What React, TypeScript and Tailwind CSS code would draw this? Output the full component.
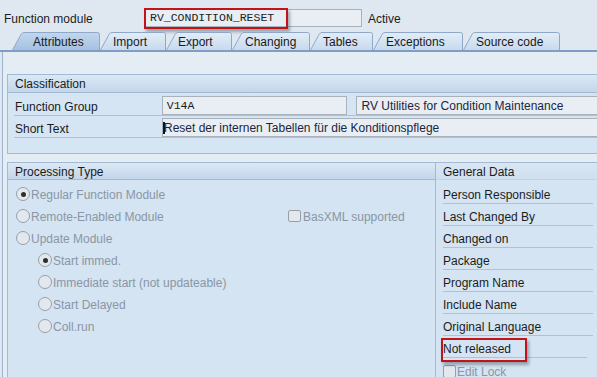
import React from "react";

const tabs = [
  { label: "Attributes", w: 88, pl: 21, active: true },
  { label: "Import", w: 66, pl: 13 },
  { label: "Export", w: 66, pl: 12 },
  { label: "Changing", w: 78, pl: 13 },
  { label: "Tables", w: 63, pl: 13 },
  { label: "Exceptions", w: 90, pl: 13 },
  { label: "Source code", w: 97, pl: 13 },
];

function Tab({ label, w, pl, active }: { label: string; w: number; pl: number; active?: boolean }) {
  const d = `M0.5 18 L9 2.5 Q10 0.5 12 0.5 L${w - 2.5} 0.5 Q${w - 0.5} 0.5 ${w - 0.5} 2.5 L${w - 0.5} 18`;
  return (
    <div className="relative h-[18px] flex items-center" style={{ width: w }}>
      <svg className="absolute inset-0" width={w} height={18} viewBox={`0 0 ${w} 18`}>
        <defs>
          <linearGradient id="tabA" x1="0" y1="0" x2="0" y2="1">
            <stop offset="0" stopColor="#c3d7ed" />
            <stop offset="1" stopColor="#a5c1e1" />
          </linearGradient>
          <linearGradient id="tabI" x1="0" y1="0" x2="0" y2="1">
            <stop offset="0" stopColor="#e3edf7" />
            <stop offset="1" stopColor="#c8daee" />
          </linearGradient>
        </defs>
        <path d={d} fill={active ? "url(#tabA)" : "url(#tabI)"} stroke="#8ea8c9" strokeWidth="1" />
      </svg>
      <span className="relative text-[12px] leading-none text-[#1a1a1a] pt-[2px]" style={{ paddingLeft: pl }}>
        {label}
      </span>
    </div>
  );
}

function Radio({ checked }: { checked?: boolean }) {
  return (
    <span className="w-[14px] h-[14px] rounded-full border border-[#9a9fa5] bg-[#e2e8ee] flex items-center justify-center shrink-0">
      {checked && <span className="w-[5px] h-[5px] rounded-full bg-[#2e2e2e]" />}
    </span>
  );
}

function RadioRow({ label, checked, indent, children }: { label: string; checked?: boolean; indent?: boolean; children?: React.ReactNode }) {
  return (
    <div className={`h-[22px] flex items-center ${indent ? "pl-[30px]" : "pl-[8px]"}`}>
      <div className={`flex items-center ${children ? "w-[272px]" : ""}`}>
        <Radio checked={checked} />
        <span className="ml-[1px] text-[#8a96a3] pt-[1px]">{label}</span>
      </div>
      {children}
    </div>
  );
}

function GenRow({ label, children }: { label: string; children?: React.ReactNode }) {
  return (
    <div className="h-[22px] relative">
      <div className="h-[20px] w-[150px] border-b border-[#b3c0cd] flex items-center pt-[3px]">{label}</div>
      {children}
    </div>
  );
}

export default function App() {
  return (
    <div className="w-[597px] h-[377px] overflow-hidden bg-[#dfe8f0] font-['Liberation_Sans',sans-serif] text-[12px] text-[#1c1c1c]">
      {/* Top row */}
      <div className="h-[32px] pt-[4px] flex items-center">
        <div className="w-[144px] pl-[4px] pt-[1px]">Function module</div>
        <div className="relative w-[218px] h-[18px] border border-[#a9b2bb] bg-[#e8eef4] flex items-center pl-[5px] font-['Liberation_Mono',monospace] text-[11.5px] text-[#222]">
          RV_CONDITION_RESET
          <div className="absolute left-[-1px] top-[-2px] w-[144px] h-[21px] border-2 border-[#c0141b] shadow-[2px_3px_3px_rgba(0,0,0,0.3)]" />
        </div>
        <div className="ml-[6px] pt-[1px]">Active</div>
      </div>

      {/* Tabs */}
      <div className="h-[18px] flex pl-[12px]">
        {tabs.map((t) => (
          <Tab key={t.label} {...t} />
        ))}
      </div>
      <div className="h-[2px] bg-[#7f9ec5]" />

      {/* Content */}
      <div className="ml-[2px] border-l border-[#9cb3cf] bg-[#e4ecf4] h-[330px] pt-[22px] pl-[4px]">
        {/* Classification */}
        <div className="w-[620px] h-[80px] border border-[#a3bad4] bg-[#d6e5f3]">
          <div className="h-[18px] border-b border-[#a3bad4] bg-gradient-to-b from-[#dce8f4] to-[#c3d6eb] pl-[7px] pt-[1px] flex items-center">
            Classification
          </div>
          <div className="ml-[6px] mt-[3px] h-[20px] border-b border-[#b3c0cd] flex items-start">
            <div className="w-[148px] pl-[1px] h-[19px] pt-[2px] flex items-center">Function Group</div>
            <div className="w-[186px] h-[19px] border border-[#a9b2bb] bg-[#e8eef4] flex items-center pl-[4px] pt-[1px] font-['Liberation_Mono',monospace] text-[11.5px]">
              V14A
            </div>
            <div className="ml-[9px] w-[270px] h-[19px] border border-[#a9b2bb] bg-[#e8eef4] flex items-center pl-[4px] pt-[1px] text-[#1d2540]">
              RV Utilities for Condition Maintenance
            </div>
          </div>
          <div className="ml-[6px] mt-[2px] h-[20px] border-b border-[#b3c0cd] flex items-start">
            <div className="w-[148px] pl-[1px] h-[19px] pt-[2px] flex items-center">Short Text</div>
            <div className="w-[460px] h-[19px] border border-[#a9b2bb] bg-[#e8eef4] flex items-center pt-[1px] text-[#1d2540]">
              <span className="w-[2px] h-[12px] bg-[#111] mr-[-1px]" />
              Reset der internen Tabellen für die Konditionspflege
            </div>
          </div>
        </div>

        {/* Processing / General */}
        <div className="mt-[8px] w-[620px] h-[230px] border border-[#a3bad4] bg-[#d4e4f3] flex">
          <div className="w-[428px] border-r border-[#a3bad4]">
            <div className="h-[17px] border-b border-[#a3bad4] bg-gradient-to-b from-[#dce8f4] to-[#c3d6eb] pl-[7px] pt-[1px] flex items-center">
              Processing Type
            </div>
            <div className="pt-[3px]">
              <RadioRow label="Regular Function Module" checked />
              <RadioRow label="Remote-Enabled Module">
                <span className="w-[13px] h-[12px] border border-[#9a9fa5] bg-[#e2e8ee] rounded-[2px]" />
                <span className="ml-[2px] text-[#8a96a3] pt-[1px]">BasXML supported</span>
              </RadioRow>
              <RadioRow label="Update Module" />
              <RadioRow label="Start immed." checked indent />
              <RadioRow label="Immediate start (not updateable)" indent />
              <RadioRow label="Start Delayed" indent />
              <RadioRow label="Coll.run" indent />
            </div>
          </div>
          <div className="flex-1">
            <div className="h-[17px] border-b border-[#c2d3e6] bg-gradient-to-b from-[#d9e6f3] to-[#d0e0f1] pl-[7px] pt-[1px] flex items-center">
              General Data
            </div>
            <div className="pt-[4px] pl-[7px]">
              <GenRow label="Person Responsible" />
              <GenRow label="Last Changed By" />
              <GenRow label="Changed on" />
              <GenRow label="Package" />
              <GenRow label="Program Name" />
              <GenRow label="Include Name" />
              <GenRow label="Original Language" />
              <div className="h-[22px] relative">
                <div className="h-[20px] w-[144px] border-b border-[#b3c0cd] flex items-center pt-[3px]">Not released</div>
                <div className="absolute left-[-2px] top-0 w-[86px] h-[24px] border-2 border-[#c0141b] shadow-[2px_3px_3px_rgba(0,0,0,0.3)]" />
              </div>
              <div className="flex items-start pt-[5px]">
                <span className="w-[13px] h-[13px] border border-[#9a9fa5] bg-[#e2e8ee] rounded-[2px]" />
                <span className="ml-[1px] text-[#8a96a3] leading-[13px] pt-[1px]">Edit Lock</span>
              </div>
            </div>
          </div>
        </div>
      </div>
    </div>
  );
}
